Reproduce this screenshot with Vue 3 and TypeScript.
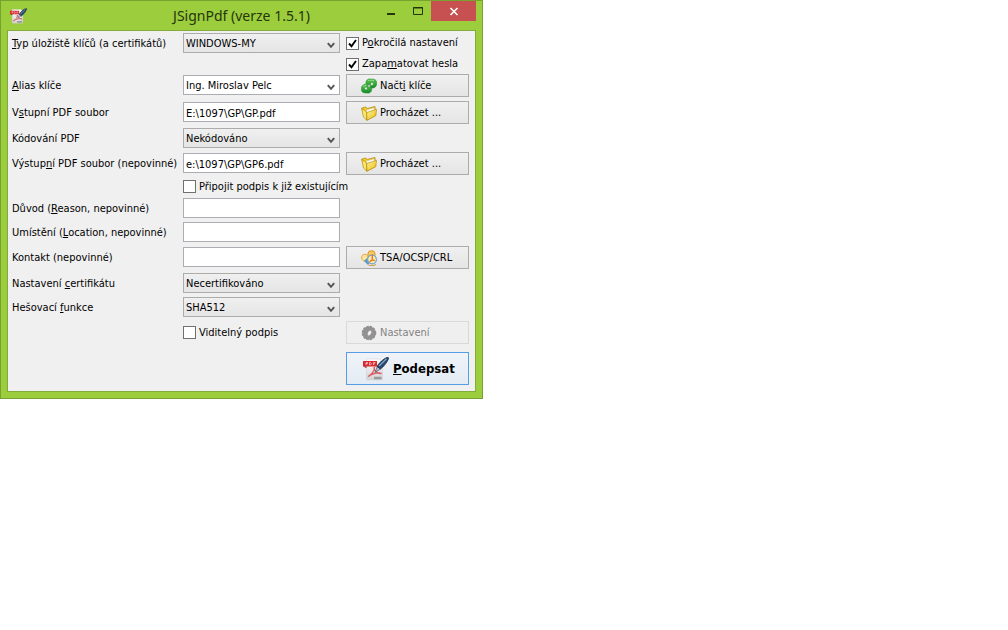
<script setup lang="ts">
import { reactive } from 'vue'

type Icon = 'refresh' | 'folder' | 'stamp' | 'gear'
interface Row {
  id: string
  size: 'slim' | 'check' | 'field' | 'action'
  // Text before the access key, the key itself, text after it
  label?: [string, string, string]
  kind: 'select' | 'combo' | 'text' | 'check' | 'none'
  value?: string
  options?: string[]
  caption?: [string, string, string]
  toggle?: { id: string; text: [string, string, string]; checked: boolean }
  button?: { icon: Icon; text: [string, string, string]; disabled?: boolean }
}

const rows = reactive<Row[]>([
  { id: 'keystore', size: 'field', label: ['', 'T', 'yp úložiště klíčů (a certifikátů)'], kind: 'select', value: 'WINDOWS-MY', options: ['WINDOWS-MY', 'PKCS12', 'JKS'], toggle: { id: 'advanced', text: ['P', 'o', 'kročilá nastavení'], checked: true } },
  { id: 'remember', size: 'slim', kind: 'none', toggle: { id: 'passwords', text: ['Zapa', 'm', 'atovat hesla'], checked: true } },
  { id: 'alias', size: 'action', label: ['', 'A', 'lias klíče'], kind: 'combo', value: 'Ing. Miroslav Pelc', options: ['Ing. Miroslav Pelc'], button: { icon: 'refresh', text: ['Načt', 'i', ' klíče'] } },
  { id: 'input', size: 'action', label: ['V', 's', 'tupní PDF soubor'], kind: 'text', value: 'E:\\1097\\GP\\GP.pdf', button: { icon: 'folder', text: ['Procházet ...', '', ''] } },
  { id: 'encryption', size: 'field', label: ['Kódování PDF', '', ''], kind: 'select', value: 'Nekódováno', options: ['Nekódováno', 'Heslo', 'Certifikát'] },
  { id: 'output', size: 'action', label: ['Výstup', 'n', 'í PDF soubor (nepovinné)'], kind: 'text', value: 'e:\\1097\\GP\\GP6.pdf', button: { icon: 'folder', text: ['Procházet ...', '', ''] } },
  { id: 'append', size: 'check', kind: 'check', caption: ['Připo', 'j', 'it podpis k již existujícím'] },
  { id: 'reason', size: 'field', label: ['Důvod (', 'R', 'eason, nepovinné)'], kind: 'text', value: '' },
  { id: 'location', size: 'field', label: ['Umístění (', 'L', 'ocation, nepovinné)'], kind: 'text', value: '' },
  { id: 'contact', size: 'action', label: ['Kontakt (nepovinné)', '', ''], kind: 'text', value: '', button: { icon: 'stamp', text: ['TSA/OCSP/CRL', '', ''] } },
  { id: 'certification', size: 'field', label: ['Nastavení ', 'c', 'ertifikátu'], kind: 'select', value: 'Necertifikováno', options: ['Necertifikováno', 'Beze změn'] },
  { id: 'hash', size: 'field', label: ['Hešovací ', 'f', 'unkce'], kind: 'select', value: 'SHA512', options: ['SHA1', 'SHA256', 'SHA512'] },
  { id: 'visible', size: 'action', kind: 'check', caption: ['Viditelný podpis', '', ''], button: { icon: 'gear', text: ['Nastavení', '', ''], disabled: true } },
])
</script>

<template>
  <main class="window">
    <header class="titlebar">
      <svg class="app-icon" viewBox="0 0 26 24" aria-hidden="true"><use href="#pdf-pen" /></svg>
      <h1>JSignPdf (verze 1.5.1)</h1>
      <div class="controls">
        <button type="button" aria-label="Minimalizovat"><svg viewBox="0 0 12 12"><path d="M2 9h8" stroke="#26350c" stroke-width="2" /></svg></button>
        <button type="button" aria-label="Maximalizovat"><svg viewBox="0 0 12 12"><path d="M1.5 2.5h9v7h-9zM1 3h10" fill="none" stroke="#26350c" /></svg></button>
        <button type="button" class="close" aria-label="Zavřít"><svg viewBox="0 0 12 12"><path d="M2.500 3l7 7M9.500 3l-7 7" stroke="#fff" stroke-width="1.600" /></svg></button>
      </div>
    </header>

    <form class="client" @submit.prevent>
      <div v-for="row in rows" :key="row.id" class="row" :class="row.size">
        <label v-if="row.label" class="label" :for="row.id">{{ row.label[0] }}<u>{{ row.label[1] }}</u>{{ row.label[2] }}</label>

        <div v-if="row.kind === 'select' || row.kind === 'combo'" class="select-box">
          <select :id="row.id" v-model="row.value" :class="row.kind">
            <option v-for="option in row.options" :key="option">{{ option }}</option>
          </select>
          <svg class="chevron" viewBox="0 0 8 7" aria-hidden="true"><path d="M.8 1.200L4 4.800 7.200 1.200" fill="none" stroke="#555" stroke-width="2" /></svg>
        </div>
        <input v-else-if="row.kind === 'text'" :id="row.id" v-model="row.value" class="text" type="text" />
        <label v-else-if="row.kind === 'check' && row.caption" class="check middle">
          <input type="checkbox" /><span>{{ row.caption[0] }}<u>{{ row.caption[1] }}</u>{{ row.caption[2] }}</span>
        </label>

        <label v-if="row.toggle" class="check side">
          <input v-model="row.toggle.checked" type="checkbox" /><span>{{ row.toggle.text[0] }}<u>{{ row.toggle.text[1] }}</u>{{ row.toggle.text[2] }}</span>
        </label>
        <button v-if="row.button" type="button" class="action side" :disabled="row.button.disabled">
          <svg viewBox="0 0 16 16" aria-hidden="true"><use :href="'#' + row.button.icon" /></svg>
          <span>{{ row.button.text[0] }}<u>{{ row.button.text[1] }}</u>{{ row.button.text[2] }}</span>
        </button>
      </div>

      <div class="row submit">
        <button type="submit" class="action side sign">
          <svg viewBox="0 0 26 24" aria-hidden="true"><use href="#pdf-pen" /></svg>
          <span><u>P</u>odepsat</span>
        </button>
      </div>
    </form>

    <svg class="symbols" aria-hidden="true">
      <defs>
        <linearGradient id="gold" x1="0" y1="0" x2="1" y2="1"><stop offset="0" stop-color="#fff59a" /><stop offset="1" stop-color="#eab90d" /></linearGradient>
        <linearGradient id="leaf" x1="0" y1="0" x2="0" y2="1"><stop offset="0" stop-color="#5cc851" /><stop offset="1" stop-color="#128b25" /></linearGradient>
        <linearGradient id="paper" x1="0" y1="0" x2="0" y2="1"><stop offset="0" stop-color="#fff" /><stop offset="1" stop-color="#d2d2d5" /></linearGradient>
      </defs>
      <symbol id="pdf-pen" viewBox="0 0 26 24">
        <path d="M3.500 2h13l3 3v18h-16z" fill="url(#paper)" stroke="#d3d3d6" stroke-width=".6" />
        <path d="M0 4h14v5.500H0z" fill="#d92a30" />
        <path d="M0 9.500h3.500v1.500z" fill="#8b1016" />
        <path d="M3 8V5.500h1.500v1.200H3M6.500 5.500V8h1l1-1.200-1-1.300zM10.500 8V5.500h2M10.500 6.800h1.500" fill="none" stroke="#fbdcdc" stroke-width=".7" />
        <path d="M5 19.500c3.500-1.500 6.500-5.500 6.500-9-1.500 0 1 6.500 7 6-3.500-1.500-9.500.3-13.500 3z" fill="none" stroke="#db5a60" stroke-width="1.300" />
        <path d="M11 21h7.500" stroke="#9a9a9d" stroke-width="2.500" />
        <path d="M12 15.500l2.300-6 3.200 2.500z" fill="#b5bdc8" stroke="#4e5967" stroke-width=".7" />
        <path d="M14 9.500c2-3.500 6.500-8 10.500-9.200.9 0 1.400.6 1 1.500-1.500 3.700-5 8.200-8 10.200z" fill="#27486c" stroke="#13263d" stroke-width=".7" />
        <path d="M16 9l7.500-7.200" stroke="#83a8d0" stroke-width="1.200" />
      </symbol>
      <symbol id="refresh" viewBox="0 0 16 16">
        <path d="M5 6C4.500 2.500 6.500.7 9.500 1l3 .2c2.500.3 3.400 2.300 3.200 4.500-.2 2.500-1.700 4.500-4.500 4.300L9 9.800l.2-2.500 2 .2c1.300 0 1.700-2.700.4-3L10 4.300 9.300 7z" fill="url(#leaf)" stroke="#2c8f2f" stroke-width=".6" />
        <path d="M10.500 9.500c.8 3.700-1 5.700-3.800 5.600l-3-.2C1 14.600.1 12.700.3 10.500.5 8 2.200 6.200 4.700 6.300l2.500.2-.3 2.700-2.200-.2c-1.200.1-1.500 2.500-.3 2.700l1.800.1.600-2.800z" fill="url(#leaf)" stroke="#2c8f2f" stroke-width=".6" />
        <path d="M7 2.800c1.500-.8 4-.6 6-.1M2 8.500c.8-.7 2-.8 3.200-.8" stroke="#9be291" fill="none" stroke-width=".9" />
      </symbol>
      <symbol id="folder" viewBox="0 0 16 16">
        <path d="M.7 3.200L4.500 2l1.800 1.400L14 1.500l.7 8.800-9 4.900z" fill="#f3cb25" stroke="#a77f08" stroke-width=".7" />
        <path d="M5.300 5.300L13 3l.4 3.500-7.500 2z" fill="#fff" stroke="#ccc" stroke-width=".5" />
        <path d="M5.700 7.500l9.900-3.200-.9 6.500-8.900 4.400z" fill="url(#gold)" stroke="#b98f0e" stroke-width=".7" />
        <path d="M.7 3.500l4.600 3 .5 8.500-3.300-3z" fill="#fbe870" stroke="#b28b0c" stroke-width=".7" />
      </symbol>
      <symbol id="stamp" viewBox="0 0 16 16">
        <circle cx="10.500" cy="4.300" r="3.700" fill="#f9c95b" stroke="#d38a1d" stroke-width=".8" />
        <path d="M1.500 5.200C3 3.800 5 4 6.500 5.500L7.500 10 3.500 11C.8 10.700-.3 7.500 1.500 5.200z" fill="#ffe59c" stroke="#dc9f32" stroke-width=".9" />
        <path d="M3.500 11l3.500 3.500 1.500-3.300L6 8.500z" fill="#5b9bd0" stroke="#3775aa" stroke-width=".6" />
        <circle cx="11" cy="9.500" r="4.400" fill="#ffe9ab" stroke="#6ba7d4" stroke-width="1.200" />
        <path d="M11.300 4.500v5.300L8.500 12M11.300 9.800l2.500.8" fill="none" stroke="#e37b22" stroke-width="1.400" />
        <path d="M7.500 15c2 .8 5 .8 7.500-.5" fill="none" stroke="#d8a14b" stroke-width="1.200" />
      </symbol>
      <symbol id="gear" viewBox="0 0 16 16">
        <circle cx="8" cy="8" r="6.300" fill="#8d8d8d" stroke="#8d8d8d" stroke-width="2" stroke-dasharray="2.200 1.100" />
        <circle cx="8" cy="8" r="6.600" fill="#929292" />
        <ellipse cx="8.500" cy="8" rx="1.600" ry="2.600" transform="rotate(30 8.500 8)" fill="#eee" />
      </symbol>
    </svg>
  </main>
</template>

<style>
body {
  background: #fff;
}
</style>

<style scoped>
.window {
  box-sizing: border-box;
  width: 483px;
  max-width: 100%;
  padding: 0 6px 6px;
  border: 1px solid #78a22f;
  background: #9bcd3c;
  color: #000;
  font: 11px/14px "DejaVu Sans Condensed", "Noto Sans", sans-serif;
}

.titlebar {
  display: grid;
  grid-template-columns: 1fr auto 1fr;
  height: 29px;
}

.app-icon {
  width: 17px;
  height: 16px;
  margin: 7px 0 0 3px;
}

h1 {
  margin: 0;
  color: #26350c;
  font: 14px/29px "Noto Sans", sans-serif;
}

.controls {
  display: flex;
  justify-content: flex-end;
  height: 20px;
}

.controls button {
  display: grid;
  place-items: center;
  width: 27px;
  padding: 0;
  border: 0;
  background: none;
}

.controls .close {
  width: 45px;
  background: #c75050;
}

.controls svg {
  width: 12px;
  height: 12px;
}

.client {
  display: flex;
  flex-direction: column;
  gap: 4px;
  padding: 2px 6px 6px 4px;
  border: 1px solid #83ab3a;
  background: #f0f0f0;
}

.row {
  display: grid;
  grid-template-columns: minmax(0, 165fr) minmax(0, 157fr) minmax(0, 123fr);
  column-gap: 6px;
  align-items: center;
}

.field { height: 20px; }
.slim { height: 13px; }
.check.row { height: 15px; }
.action.row { height: 23px; }

.submit {
  margin-top: 4px;
}

.label {
  grid-column: 1;
  padding-top: 1px;
  white-space: nowrap;
}

.select-box,
.text,
.middle {
  grid-column: 2;
}

.side {
  grid-column: 3;
}

.select-box {
  position: relative;
}

.action > .select-box,
.action > .text {
  margin-bottom: 1px;
}

select,
.text {
  box-sizing: border-box;
  display: block;
  width: 100%;
  height: 20px;
  margin: 0;
  padding: 2px 2px 0;
  border: 1px solid #abadb3;
  border-radius: 0;
  background: #fff;
  color: #000;
  font: inherit;
  appearance: none;
}

.combo {
  padding: 1px 2px 0;
}

.select {
  padding: 2px 2px 0;
  border-color: #acacac;
  background: linear-gradient(#f0f0f0, #e5e5e5);
}

.chevron {
  position: absolute;
  right: 5px;
  top: 9px;
  width: 8px;
  height: 7px;
  pointer-events: none;
}

label.check {
  display: flex;
  align-items: center;
  gap: 3px;
  white-space: nowrap;
}

label.check input {
  box-sizing: border-box;
  flex: none;
  width: 13px;
  height: 13px;
  margin: 0;
  border: 1px solid #707070;
  background: #fff;
  appearance: none;
}

label.check input:checked {
  background: #fff url("data:image/svg+xml,%3Csvg xmlns='http://www.w3.org/2000/svg' viewBox='0 0 11 11'%3E%3Cpath d='M2 5.500l2.500 2.700L9 2' fill='none' stroke='%23000' stroke-width='1.900'/%3E%3C/svg%3E") center / 11px 11px;
}

button.action {
  box-sizing: border-box;
  display: flex;
  align-items: center;
  gap: 3px;
  height: 23px;
  padding: 0 14px;
  border: 1px solid #acacac;
  background: linear-gradient(#f0f0f0, #e5e5e5);
  color: #000;
  font: inherit;
  white-space: nowrap;
}

button.action svg {
  flex: none;
  width: 16px;
  height: 16px;
}

button.action:disabled {
  border-color: #d9d9d9;
  background: #efefef;
  color: #838383;
}

button.sign {
  gap: 4px;
  height: 33px;
  padding: 0 16px;
  border-color: #569de5;
  background: linear-gradient(#f0f4f9, #e3ebf4);
  font-size: 13px;
  font-weight: bold;
}

button.sign svg {
  width: 26px;
  height: 24px;
}

.symbols {
  position: absolute;
  width: 0;
  height: 0;
}
</style>
